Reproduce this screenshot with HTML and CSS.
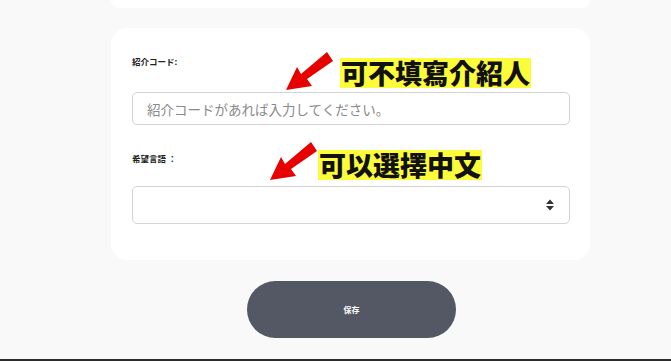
FILE: index.html
```html
<!DOCTYPE html>
<html lang="ja">
<head>
<meta charset="utf-8">
<link rel="stylesheet" href="styles.css">
</head>
<body>
<div class="page">
  <div class="column">
    <div class="card-top"></div>
    <div class="card">
      <div class="field">
        <label class="label">紹介コード:</label>
        <input class="input" type="text" placeholder="紹介コードがあれば入力してください。">
      </div>
      <div class="field field-lang">
        <label class="label">希望言語 ：</label>
        <div class="select">
          <svg class="select-arrow" width="10" height="14" viewBox="0 0 10 14"><path d="M1 6 L5 1.5 L9 6 Z M1 8 L5 12.5 L9 8 Z" fill="#333"/></svg>
        </div>
      </div>
    </div>
    <div class="actions">
      <button class="save">保存</button>
    </div>
  </div>
  <div class="bottom-bar"></div>
</div>

<svg class="arrow arrow-1" width="60" height="50" viewBox="0 0 60 50"><path d="M47 2 L53 11 L27 29 L32 36 L6 40 L17 17 L21 24 Z" fill="#e60000"/></svg>
<div class="note note-1">可不填寫介紹人</div>

<svg class="arrow arrow-2" width="60" height="50" viewBox="0 0 60 50"><path d="M47 2 L53 11 L27 29 L32 36 L6 40 L17 17 L21 24 Z" fill="#e60000"/></svg>
<div class="note note-2">可以選擇中文</div>
</body>
</html>
```
FILE: styles.css
```css
html, body {
  margin: 0;
  padding: 0;
}
body {
  background: #f9f9f9;
  font-family: "Noto Sans CJK JP", "Noto Sans", sans-serif;
  width: 671px;
  height: 361px;
  overflow: hidden;
  position: relative;
}
.page {
  display: flex;
  flex-direction: column;
  height: 361px;
}
.column {
  margin-left: 111px;
  width: 479px;
  flex: 1;
  display: flex;
  flex-direction: column;
}
.card-top {
  height: 8px;
  background: #fff;
  border-radius: 0 0 16px 16px;
}
.card {
  margin-top: 20px;
  height: 232px;
  box-sizing: border-box;
  background: #fff;
  border-radius: 16px;
  padding: 27px 20px 0 21px;
}
.field {
  display: flex;
  flex-direction: column;
}
.label {
  font-size: 8.5px;
  line-height: 12px;
  font-weight: 700;
  color: #222;
  height: 12px;
  margin-bottom: 25px;
}
.input {
  height: 33px;
  box-sizing: border-box;
  border: 1px solid #d4d4d4;
  border-radius: 5px;
  padding: 0 14px;
  font-family: "Noto Sans CJK JP", sans-serif;
  font-size: 13.5px;
  color: #333;
  outline: none;
}
.input::placeholder {
  color: #8a8a8a;
}
.field-lang {
  margin-top: 27px;
}
.field-lang .label {
  margin-bottom: 22px;
}
.select {
  height: 38px;
  box-sizing: border-box;
  border: 1px solid #d4d4d4;
  border-radius: 5px;
  display: flex;
  align-items: center;
  justify-content: flex-end;
  padding-right: 14px;
}
.select-arrow {
  display: block;
}
.actions {
  display: flex;
  justify-content: center;
  margin-top: 21px;
  padding-left: 2px;
}
.save {
  width: 209px;
  height: 57px;
  border: none;
  border-radius: 29px;
  background: #535864;
  color: #fff;
  font-family: "Noto Sans CJK JP", sans-serif;
  font-size: 8px;
  font-weight: 700;
  padding: 0;
}
.bottom-bar {
  height: 2px;
  background: #2b2b2b;
}
.arrow {
  position: absolute;
}
.arrow-1 {
  left: 280px;
  top: 50px;
}
.arrow-2 {
  left: 264px;
  top: 140px;
}
.note {
  position: absolute;
  background: #fcfc3a;
  color: #111;
  font-family: "Noto Sans CJK TC", sans-serif;
  font-weight: 900;
  font-size: 27px;
  line-height: 30px;
  height: 30px;
  padding: 0 1px;
  letter-spacing: 0;
}
.note-1 {
  left: 340px;
  top: 58px;
}
.note-2 {
  left: 318px;
  top: 150px;
}
```
